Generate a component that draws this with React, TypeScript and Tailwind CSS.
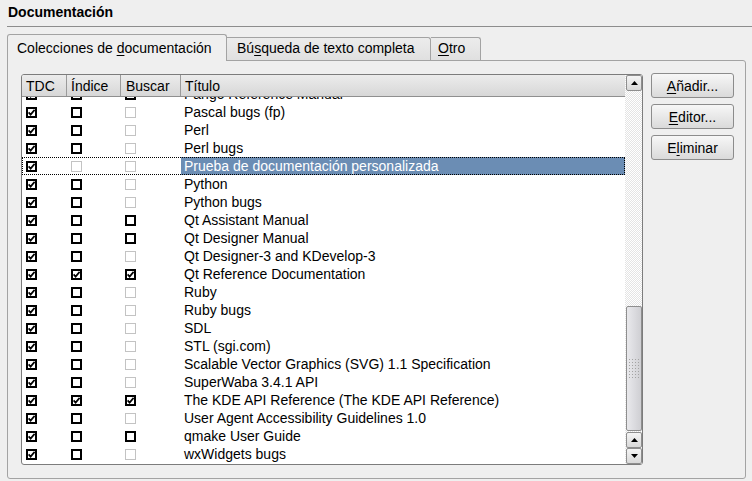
import React from 'react';

type Box = 'on' | 'off' | 'dis';

const rows: { title: string; idx: Box; bus: Box }[] = [
  { title: 'Pango Reference Manual', idx: 'off', bus: 'off' },
  { title: 'Pascal bugs (fp)', idx: 'off', bus: 'dis' },
  { title: 'Perl', idx: 'off', bus: 'dis' },
  { title: 'Perl bugs', idx: 'off', bus: 'dis' },
  { title: 'Prueba de documentación personalizada', idx: 'dis', bus: 'dis' },
  { title: 'Python', idx: 'off', bus: 'dis' },
  { title: 'Python bugs', idx: 'off', bus: 'dis' },
  { title: 'Qt Assistant Manual', idx: 'off', bus: 'off' },
  { title: 'Qt Designer Manual', idx: 'off', bus: 'off' },
  { title: 'Qt Designer-3 and KDevelop-3', idx: 'off', bus: 'dis' },
  { title: 'Qt Reference Documentation', idx: 'on', bus: 'on' },
  { title: 'Ruby', idx: 'off', bus: 'dis' },
  { title: 'Ruby bugs', idx: 'off', bus: 'dis' },
  { title: 'SDL', idx: 'off', bus: 'dis' },
  { title: 'STL (sgi.com)', idx: 'off', bus: 'dis' },
  { title: 'Scalable Vector Graphics (SVG) 1.1 Specification', idx: 'off', bus: 'dis' },
  { title: 'SuperWaba 3.4.1 API', idx: 'off', bus: 'dis' },
  { title: 'The KDE API Reference (The KDE API Reference)', idx: 'on', bus: 'on' },
  { title: 'User Agent Accessibility Guidelines 1.0', idx: 'off', bus: 'dis' },
  { title: 'qmake User Guide', idx: 'off', bus: 'off' },
  { title: 'wxWidgets bugs', idx: 'off', bus: 'dis' },
];

const SELECTED = 4;

function CheckBox({ state }: { state: Box }) {
  if (state === 'dis') {
    return <span className="block w-[11px] h-[11px] border border-[#c3c3c3] bg-white" />;
  }
  return (
    <span className="block w-[11px] h-[11px] border-2 border-black bg-white">
      {state === 'on' && (
        <svg width="7" height="7" viewBox="0 0 7 7" className="block">
          <polyline points="0.6,3.4 2.6,5.6 6.6,0.8" fill="none" stroke="black" strokeWidth="1.7" />
        </svg>
      )}
    </span>
  );
}

function Arrow({ up }: { up: boolean }) {
  return (
    <svg width="7" height="4" viewBox="0 0 7 4">
      <polygon points={up ? '0,4 7,4 3.5,0' : '0,0 7,0 3.5,4'} fill="black" />
    </svg>
  );
}

function ScrollButton({ up, className = '' }: { up: boolean; className?: string }) {
  return (
    <div
      className={`flex items-center justify-center border border-[#8e8e8e] rounded-[2px] bg-linear-to-b from-[#f5f5f5] to-[#d9d9d9] ${className}`}
    >
      <Arrow up={up} />
    </div>
  );
}

function Grip() {
  const dots = [];
  for (let r = 0; r < 7; r++) {
    for (let c = 0; c < 4; c++) {
      dots.push(<rect key={`${r}-${c}`} x={c * 3} y={r * 3} width="1" height="1" fill="#a3a3a3" />);
    }
  }
  return (
    <svg width="11" height="19" viewBox="0 0 11 19">
      {dots}
    </svg>
  );
}

function PushButton({ pre, u, post }: { pre: string; u: string; post: string }) {
  return (
    <button className="w-[83px] h-[25px] border border-[#8c8c8c] rounded-[3px] bg-linear-to-b from-[#f7f7f7] to-[#dadada] leading-[16px] text-center">
      {pre}
      <span className="underline underline-offset-2">{u}</span>
      {post}
    </button>
  );
}

export default function App() {
  return (
    <div className="w-[752px] h-[481px] overflow-hidden bg-[#efefef] font-['Liberation_Sans',Arial,sans-serif] text-[14px] leading-[16px] text-black select-none">
      {/* Group title */}
      <div className="h-[27px] ml-[7px] pl-[1px] pt-[4px] border-b border-[#8d8d8d] font-bold">Documentación</div>

      {/* Tab strip */}
      <div className="relative z-10 flex items-start h-[26px] ml-[7px] mt-[7px]">
        <div className="w-[220px] h-[27px] pl-[9px] pt-[5px] border-x border-t border-[#a3a3a3] rounded-t-[3px] bg-[#efefef]">
          Colecciones de <span className="underline underline-offset-2">d</span>ocumentación
        </div>
        <div className="w-[204px] h-[23px] mt-[3px] pl-[10px] pt-[2px] border-t border-r border-[#a3a3a3] rounded-tr-[3px] bg-linear-to-b from-[#ececec] to-[#e0e0e0]">
          Bú<span className="underline underline-offset-2">s</span>queda de texto completa
        </div>
        <div className="w-[50px] h-[23px] mt-[3px] pl-[7px] pt-[2px] border-t border-r border-[#a3a3a3] rounded-tr-[3px] bg-linear-to-b from-[#ececec] to-[#e0e0e0]">
          <span className="underline underline-offset-2">O</span>tro
        </div>
      </div>

      {/* Tab panel */}
      <div className="ml-[7px] w-[739px] h-[419px] border border-[#a3a3a3] rounded-b-[3px] rounded-tr-[3px] flex pl-[13px] pt-[13px]">
        {/* List */}
        <div className="w-[622px] h-[391px] border border-[#7c7c7c] rounded-[3px] bg-white flex overflow-hidden">
          <div className="w-[603px] flex flex-col">
            {/* Header */}
            <div className="h-[22px] flex border-b border-[#8f8f8f] bg-linear-to-b from-[#ececec] to-[#d7d7d7]">
              <div className="w-[45px] pl-[4px] pt-[3px] border-r border-[#9a9a9a]">TDC</div>
              <div className="w-[54px] pl-[4px] pt-[3px] border-r border-[#9a9a9a]">Índice</div>
              <div className="w-[60px] pl-[5px] pt-[3px] border-r border-[#9a9a9a]">Buscar</div>
              <div className="flex-1 pl-[4px] pt-[3px]">Título</div>
            </div>
            {/* Body */}
            <div className="flex-1 overflow-hidden">
              <div className="-mt-[12px]">
                {rows.map((r, i) => {
                  const sel = i === SELECTED;
                  return (
                    <div
                      key={r.title}
                      className={`h-[18px] flex items-center leading-[18px] ${sel ? 'outline-1 outline-dotted outline-black -outline-offset-1' : ''}`}
                    >
                      <div className="w-[45px] pl-[4px]">
                        <CheckBox state="on" />
                      </div>
                      <div className="w-[54px] pl-[4px]">
                        <CheckBox state={r.idx} />
                      </div>
                      <div className="w-[60px] pl-[4px]">
                        <CheckBox state={r.bus} />
                      </div>
                      <div className={`flex-1 h-[18px] pl-[3px] whitespace-nowrap ${sel ? 'bg-[#6b8db4] text-white' : ''}`}>
                        {r.title}
                      </div>
                    </div>
                  );
                })}
              </div>
            </div>
          </div>

          {/* Scrollbar */}
          <div className="w-[17px] flex flex-col pl-[1px] bg-[repeating-conic-gradient(#e4e4e4_0%_25%,#ffffff_0%_50%)] bg-[length:2px_2px]">
            <ScrollButton up className="h-[16px]" />
            <div className="flex-1" />
            <div className="h-[125px] flex items-center justify-center border border-[#8e8e8e] rounded-[2px] bg-linear-to-r from-[#e9e9ec] via-[#dcdce0] to-[#cfcfd3]">
              <Grip />
            </div>
            <ScrollButton up className="h-[16px] mt-[1px]" />
            <ScrollButton up={false} className="h-[16px]" />
          </div>
        </div>

        {/* Buttons */}
        <div className="ml-[8px] -mt-[1px] flex flex-col gap-[6px]">
          <PushButton pre="" u="A" post="ñadir..." />
          <PushButton pre="" u="E" post="ditor..." />
          <PushButton pre="E" u="l" post="iminar" />
        </div>
      </div>
    </div>
  );
}
